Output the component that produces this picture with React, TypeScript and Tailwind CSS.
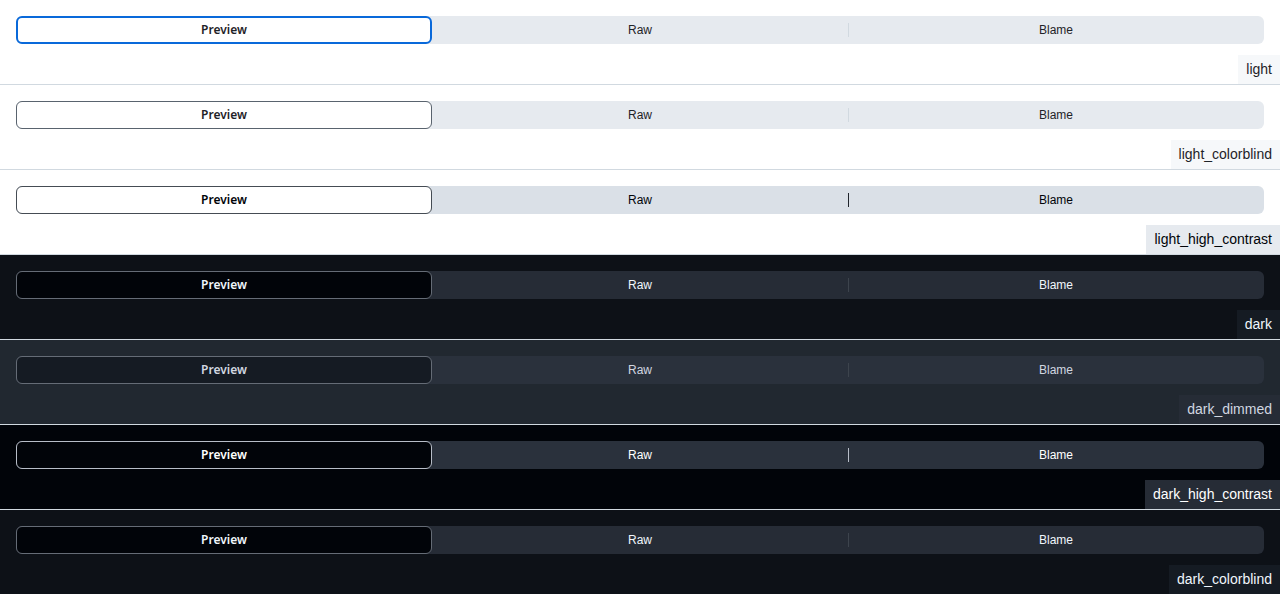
import React from "react";

type Theme = {
  name: string;
  bg: string;
  track: string;
  selBg: string;
  selBorder: string;
  selText: string;
  text: string;
  divider: string;
  labelBg: string;
  labelText: string;
};

const themes: Theme[] = [
  {
    name: "light",
    bg: "bg-white",
    track: "bg-[#e6eaef]",
    selBg: "bg-white",
    selBorder: "border-2 border-[#0969da]",
    selText: "text-[#1f2328]",
    text: "text-[#1f2328]",
    divider: "bg-[#d1d9e0]",
    labelBg: "bg-[#f6f8fa]",
    labelText: "text-[#1f2328]",
  },
  {
    name: "light_colorblind",
    bg: "bg-white",
    track: "bg-[#e6eaef]",
    selBg: "bg-white",
    selBorder: "border border-[#59636e]",
    selText: "text-[#1f2328]",
    text: "text-[#1f2328]",
    divider: "bg-[#d1d9e0]",
    labelBg: "bg-[#f6f8fa]",
    labelText: "text-[#1f2328]",
  },
  {
    name: "light_high_contrast",
    bg: "bg-white",
    track: "bg-[#dae0e7]",
    selBg: "bg-white",
    selBorder: "border border-[#454c54]",
    selText: "text-[#010409]",
    text: "text-[#010409]",
    divider: "bg-[#20252c]",
    labelBg: "bg-[#e6eaef]",
    labelText: "text-[#010409]",
  },
  {
    name: "dark",
    bg: "bg-[#0d1117]",
    track: "bg-[#262c36]",
    selBg: "bg-[#010409]",
    selBorder: "border border-[#656c76]",
    selText: "text-[#f0f6fc]",
    text: "text-[#f0f6fc]",
    divider: "bg-[#3d444d]",
    labelBg: "bg-[#151b23]",
    labelText: "text-[#f0f6fc]",
  },
  {
    name: "dark_dimmed",
    bg: "bg-[#212830]",
    track: "bg-[#2a313c]",
    selBg: "bg-[#151b23]",
    selBorder: "border border-[#656c76]",
    selText: "text-[#d1d7e0]",
    text: "text-[#d1d7e0]",
    divider: "bg-[#3d444d]",
    labelBg: "bg-[#262c36]",
    labelText: "text-[#d1d7e0]",
  },
  {
    name: "dark_high_contrast",
    bg: "bg-[#010409]",
    track: "bg-[#2a313c]",
    selBg: "bg-[#010409]",
    selBorder: "border border-[#b7bdc8]",
    selText: "text-[#ffffff]",
    text: "text-[#ffffff]",
    divider: "bg-[#b7bdc8]",
    labelBg: "bg-[#262c36]",
    labelText: "text-[#ffffff]",
  },
  {
    name: "dark_colorblind",
    bg: "bg-[#0d1117]",
    track: "bg-[#262c36]",
    selBg: "bg-[#010409]",
    selBorder: "border border-[#656c76]",
    selText: "text-[#f0f6fc]",
    text: "text-[#f0f6fc]",
    divider: "bg-[#3d444d]",
    labelBg: "bg-[#151b23]",
    labelText: "text-[#f0f6fc]",
  },
];

const Section = ({ t }: { t: Theme }) => (
  <div className={`${t.bg} border-b border-[#d1d9e0]`}>
    <div className="px-4 pt-4">
      <div className={`${t.track} grid h-7 grid-cols-3 rounded-md text-xs`}>
        <div
          className={`${t.selBg} ${t.selBorder} ${t.selText} flex items-center justify-center rounded-md font-semibold font-['Noto_Sans',sans-serif]`}
        >
          Preview
        </div>
        <div className={`${t.text} flex items-center justify-center`}>Raw</div>
        <div className={`${t.text} flex items-center`}>
          <div className={`${t.divider} h-[14px] w-px`} />
          <span className="flex-1 pr-px text-center">Blame</span>
        </div>
      </div>
    </div>
    <div className="mt-[11px] flex justify-end">
      <span className={`${t.labelBg} ${t.labelText} px-2 py-1 text-sm leading-[21px]`}>{t.name}</span>
    </div>
  </div>
);

export default function App() {
  return (
    <div className="font-['Liberation_Sans',Arial,sans-serif]">
      {themes.map((t) => (
        <Section key={t.name} t={t} />
      ))}
    </div>
  );
}
